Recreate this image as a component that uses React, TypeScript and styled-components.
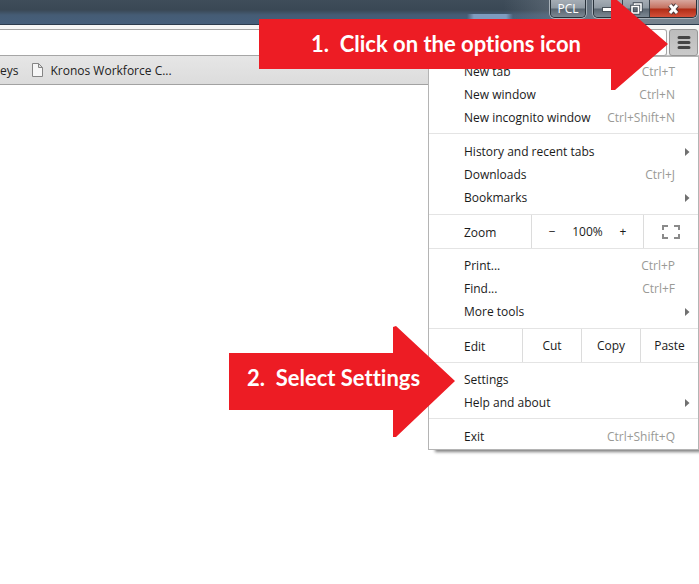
import React from "react";
import styled, { createGlobalStyle } from "styled-components";

const Global = createGlobalStyle`
  * { box-sizing: border-box; }
  body { margin: 0; background: #fff; font-family: "Open Sans", "Noto Sans", sans-serif; font-size: 12px; color: #1a1a1a; }
  button, input { font: inherit; color: inherit; }
  button { border: 0; padding: 0; background: none; }
  svg { display: block; }
`;
const Window = styled.div`
  position: relative;
  min-height: 100vh;
  overflow: hidden;
`;
const TitleBar = styled.header`
  display: flex;
  justify-content: flex-end;
  align-items: flex-start;
  height: 25px;
  padding-right: 2px;
  border-bottom: 1px solid #2c3b4d;
  background:
    linear-gradient(90deg, #7e9cc000, #7e9cc0 15%, #7e9cc0 85%, #7e9cc000) calc(100% - 186px) 14px / 46px 10px no-repeat,
    linear-gradient(90deg, #0000 72%, #76828e 88%),
    linear-gradient(#3f4d5a 0, #3a4855 10px, #455c75 15px, #465f7b 100%);
`;
const Caption = styled.div`
  display: flex;
  height: 18px;
  border: 1px solid #29323b;
  border-top: 0;
  border-radius: 0 0 5px 5px;
  box-shadow: 0 0 0 1px #a9b2ba;
  overflow: hidden;
`;
const ProfileCaption = styled(Caption)`
  margin-right: 7px;
`;
const CaptionButton = styled.button<{ $width: number; $close?: boolean }>`
  display: flex;
  align-items: center;
  justify-content: center;
  width: ${(p) => p.$width}px;
  color: #fff;
  border-left: 1px solid #38424c;
  background: ${(p) =>
    p.$close
      ? "linear-gradient(#d8a79e 0, #c5705f 8px, #b02c16 9px, #d4503a 100%)"
      : "linear-gradient(#a5adb5 0, #8f99a2 8px, #5a6570 9px, #7c8893 100%)"};
  &:first-child { border-left: 0; }
`;
const Toolbar = styled.div`
  display: flex;
  gap: 2px;
  height: 31px;
  padding: 4px 1px 0 0;
  background: #f6f6f6;
  border-bottom: 1px solid #c2c2c2;
`;
const Address = styled.input`
  flex: 1;
  min-width: 0;
  height: 27px;
  border: 1px solid #a6a6a6;
  border-left: 0;
  border-radius: 0 3px 3px 0;
  background: #fff;
`;
const OptionsButton = styled.button`
  display: flex;
  align-items: center;
  justify-content: center;
  width: 29px;
  height: 27px;
  border: 1px solid #969696;
  border-radius: 3px;
  background: linear-gradient(#bcbcbc, #cacaca);
`;
const Bookmarks = styled.nav`
  display: flex;
  align-items: center;
  gap: 14px;
  height: 29px;
  background: linear-gradient(#e6e6e6, #dcdcdc);
  border-bottom: 1px solid #a2a2a2;
`;
const Bookmark = styled.a`
  display: flex;
  align-items: center;
  gap: 7px;
  color: #222;
  text-decoration: none;
`;
const Menu = styled.div`
  position: absolute;
  top: 56px;
  right: 0;
  width: 271px;
  background: #fff;
  border: 1px solid #b4b4b4;
  box-shadow: 5px 4px 3px -2px #808080;
`;
const Group = styled.div<{ $top: number; $bottom: number }>`
  padding: ${(p) => p.$top}px 0 ${(p) => p.$bottom}px;
  & + & { border-top: 1px solid #e4e4e4; }
`;
const Item = styled.button`
  display: flex;
  align-items: center;
  justify-content: space-between;
  width: 100%;
  height: 23px;
  padding: 0 23px 0 35px;
  text-align: left;
`;
const Shortcut = styled.span`
  color: #9a9a96;
`;
const SubArrow = styled.svg`
  margin-right: -15px;
`;
const Strip = styled.div`
  display: flex;
  height: 35px;
  border-top: 1px solid #e4e4e4;
  border-bottom: 1px solid #e4e4e4;
`;
const StripLabel = styled.span`
  flex: 1;
  padding-left: 35px;
  line-height: 35px;
`;
const StripCell = styled.div<{ $width: number }>`
  display: flex;
  align-items: center;
  justify-content: center;
  width: ${(p) => p.$width}px;
  border-left: 1px solid #dcdcdc;
`;
const StripButton = styled.button`
  flex: 1;
  height: 100%;
`;
const FullScreenButton = styled(StripButton)`
  display: flex;
  align-items: center;
  justify-content: center;
`;
const Callout = styled.div<{ $top: number; $right: number }>`
  position: absolute;
  top: ${(p) => p.$top}px;
  right: ${(p) => p.$right}px;
`;
const CalloutText = styled.strong<{ $left: number; $top: number }>`
  position: absolute;
  left: ${(p) => p.$left}px;
  top: ${(p) => p.$top}px;
  font: bold 22px/28px Lato, "Open Sans", sans-serif;
  font-variant-ligatures: none;
  color: #fff;
  white-space: pre;
`;

type Entry = { label: string; keys?: string; sub?: boolean };

function Entries({ items, top, bottom }: { items: Entry[]; top: number; bottom: number }) {
  return (
    <Group $top={top} $bottom={bottom}>
      {items.map((i) => (
        <Item key={i.label} role="menuitem">
          <span>{i.label}</span>
          {i.keys && <Shortcut>{i.keys}</Shortcut>}
          {i.sub && (
            <SubArrow width="5" height="8" viewBox="0 0 5 8" aria-hidden="true">
              <path d="M0 0L4.5 4L0 8Z" fill="#707070" />
            </SubArrow>
          )}
        </Item>
      ))}
    </Group>
  );
}

export default function App() {
  return (
    <Window>
      <Global />
      <TitleBar>
        <ProfileCaption>
          <CaptionButton $width={34}>PCL</CaptionButton>
        </ProfileCaption>
        <Caption>
          <CaptionButton $width={28} aria-label="Minimize">
            <svg width="12" height="6"><rect x="0.5" y="1.5" width="11" height="4" fill="#fff" stroke="#4a525b" /></svg>
          </CaptionButton>
          <CaptionButton $width={27} aria-label="Restore">
            <svg width="13" height="13" fill="none">
              <path d="M4.500 3V2H11V8.500H10M2 4.500H8.500V11H2Z" stroke="#424b55" strokeWidth="3.500" />
              <path d="M4.500 3V2H11V8.500H10M2 4.500H8.500V11H2Z" stroke="#fff" strokeWidth="1.600" />
            </svg>
          </CaptionButton>
          <CaptionButton $width={47} $close aria-label="Close">
            <svg width="13" height="12" fill="none">
              <path d="M3 2L10 10M10 2L3 10" stroke="#4c3a3c" strokeWidth="5" />
              <path d="M3 2L10 10M10 2L3 10" stroke="#fff" strokeWidth="3" />
            </svg>
          </CaptionButton>
        </Caption>
      </TitleBar>
      <Toolbar>
        <Address aria-label="Address" />
        <OptionsButton aria-label="Options">
          <svg width="14" height="13" stroke="#454545" strokeWidth="3" strokeLinecap="round">
            <path d="M2 1.500H12M2 6.500H12M2 11.500H12" />
          </svg>
        </OptionsButton>
      </Toolbar>
      <Bookmarks>
        <Bookmark href="#surveys">eys</Bookmark>
        <Bookmark href="#kronos">
          <svg width="11" height="14" fill="#f6f6f6" stroke="#858585">
            <path d="M.5.5H6.500L10.500 4.500V13.500H.5ZM6.500.5V4.500H10.500" />
          </svg>
          Kronos Workforce C...
        </Bookmark>
      </Bookmarks>

      <Menu role="menu">
        <Entries top={3} bottom={4} items={[
          { label: "New tab", keys: "Ctrl+T" },
          { label: "New window", keys: "Ctrl+N" },
          { label: "New incognito window", keys: "Ctrl+Shift+N" },
        ]} />
        <Entries top={6} bottom={5} items={[
          { label: "History and recent tabs", sub: true },
          { label: "Downloads", keys: "Ctrl+J" },
          { label: "Bookmarks", sub: true },
        ]} />
        <Strip>
          <StripLabel>Zoom</StripLabel>
          <StripCell $width={112}>
            <StripButton aria-label="Zoom out">−</StripButton>
            <span>100%</span>
            <StripButton aria-label="Zoom in">+</StripButton>
          </StripCell>
          <StripCell $width={55}>
            <FullScreenButton aria-label="Full screen">
              <svg width="18" height="14" fill="none" stroke="#8a8a8a" strokeWidth="2">
                <path d="M1 5V1H6M12 1H17V5M17 9V13H12M6 13H1V9" />
              </svg>
            </FullScreenButton>
          </StripCell>
        </Strip>
        <Entries top={5} bottom={5} items={[
          { label: "Print...", keys: "Ctrl+P" },
          { label: "Find...", keys: "Ctrl+F" },
          { label: "More tools", sub: true },
        ]} />
        <Strip>
          <StripLabel>Edit</StripLabel>
          <StripCell $width={59}><StripButton>Cut</StripButton></StripCell>
          <StripCell $width={59}><StripButton>Copy</StripButton></StripCell>
          <StripCell $width={58}><StripButton>Paste</StripButton></StripCell>
        </Strip>
        <Entries top={5} bottom={4} items={[{ label: "Settings" }, { label: "Help and about", sub: true }]} />
        <Entries top={6} bottom={1} items={[{ label: "Exit", keys: "Ctrl+Shift+Q" }]} />
      </Menu>

      <Callout $top={0} $right={31}>
        <svg width="409" height="91" fill="#ed1c24">
          <path d="M0 19H352V0H358L409 44L356 90H352V69H0Z" />
        </svg>
        <CalloutText $left={52} $top={30}>1.  Click on the options icon</CalloutText>
      </Callout>
      <Callout $top={326} $right={244}>
        <svg width="226" height="111" fill="#ed1c24">
          <path d="M0 27H164V1L167 0L226 55L167 111H164V84H0Z" />
        </svg>
        <CalloutText $left={18} $top={38}>2.  Select Settings</CalloutText>
      </Callout>
    </Window>
  );
}
